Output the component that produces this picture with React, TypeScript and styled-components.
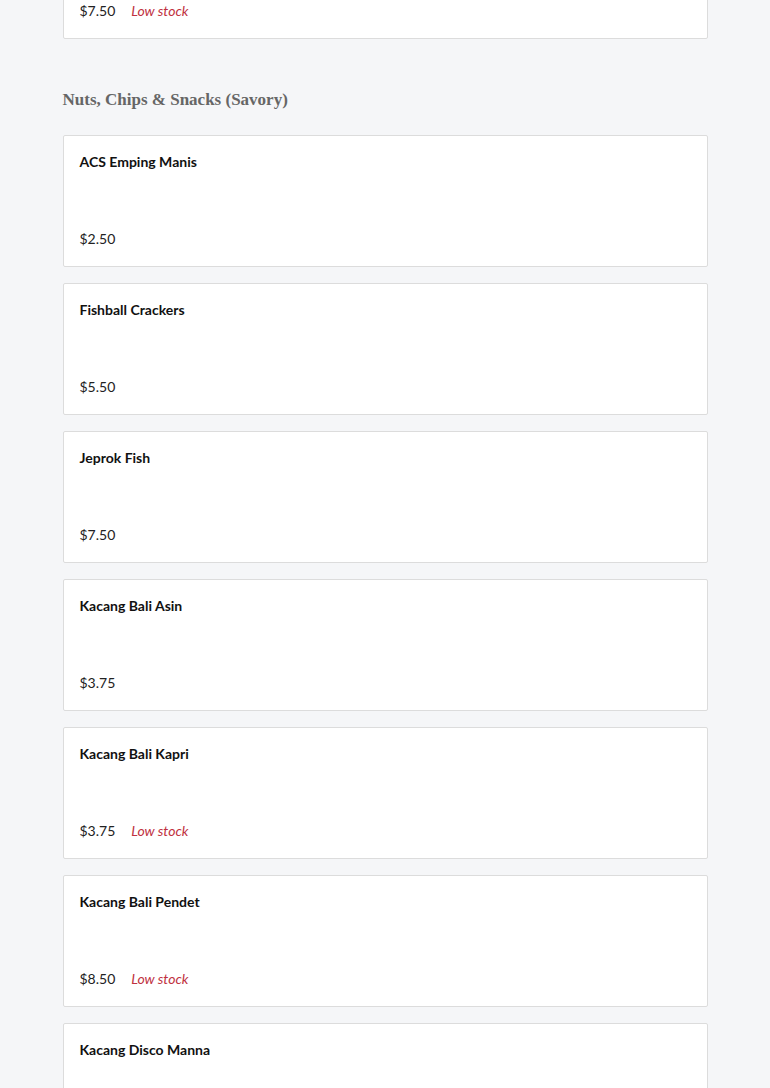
import React from "react";
import styled, { createGlobalStyle } from "styled-components";

const GlobalStyle = createGlobalStyle`
  html, body {
    margin: 0;
    padding: 0;
    background-color: #f5f6f8;
  }
  body {
    font-family: Lato, "Noto Sans", sans-serif;
    color: #111;
  }
`;

type Item = { name: string; price: string; low?: boolean };

const previous: Item = { name: "Keripik Pisang", price: "$7.50", low: true };

const savory: Item[] = [
  { name: "ACS Emping Manis", price: "$2.50" },
  { name: "Fishball Crackers", price: "$5.50" },
  { name: "Jeprok Fish", price: "$7.50" },
  { name: "Kacang Bali Asin", price: "$3.75" },
  { name: "Kacang Bali Kapri", price: "$3.75", low: true },
  { name: "Kacang Bali Pendet", price: "$8.50", low: true },
  { name: "Kacang Disco Manna", price: "$4.25" },
];

const ProductCard = ({ item }: { item: Item }) => (
  <Card>
    <Name>{item.name}</Name>
    <PriceRow>
      <Price>{item.price}</Price>
      {item.low && <Stock>Low stock</Stock>}
    </PriceRow>
  </Card>
);

const App = () => {
  return (
    <>
      <GlobalStyle />
      <Page>
        <CardList>
          <ProductCard item={previous} />
        </CardList>
        <Section>
          <SectionTitle>Nuts, Chips &amp; Snacks (Savory)</SectionTitle>
          <CardList>
            {savory.map((item) => (
              <ProductCard key={item.name} item={item} />
            ))}
          </CardList>
        </Section>
      </Page>
    </>
  );
};

const Page = styled.div`
  width: 645px;
  margin: -93px auto 0;
  padding-bottom: 40px;
`;

const Section = styled.section`
  margin-top: 48px;
`;

const SectionTitle = styled.h2`
  font-family: "Liberation Serif", "DejaVu Serif", serif;
  font-size: 17px;
  font-weight: 700;
  color: #666;
  margin: 0 0 22px;
  line-height: 26px;
`;

const CardList = styled.div`
  display: flex;
  flex-direction: column;
  gap: 16px;
`;

const Card = styled.div`
  box-sizing: border-box;
  height: 132px;
  background: #fff;
  border: 1px solid #dcdcdc;
  border-radius: 2px;
  padding: 16px;
  display: flex;
  flex-direction: column;
  justify-content: space-between;
`;

const Name = styled.div`
  font-size: 14px;
  font-weight: 700;
  line-height: 20px;
  color: #111;
`;

const PriceRow = styled.div`
  display: flex;
  align-items: baseline;
  gap: 16px;
  line-height: 22px;
`;

const Price = styled.span`
  font-size: 14px;
  color: #222;
`;

const Stock = styled.span`
  font-size: 14px;
  font-style: italic;
  color: #c0313f;
`;

export default App;
